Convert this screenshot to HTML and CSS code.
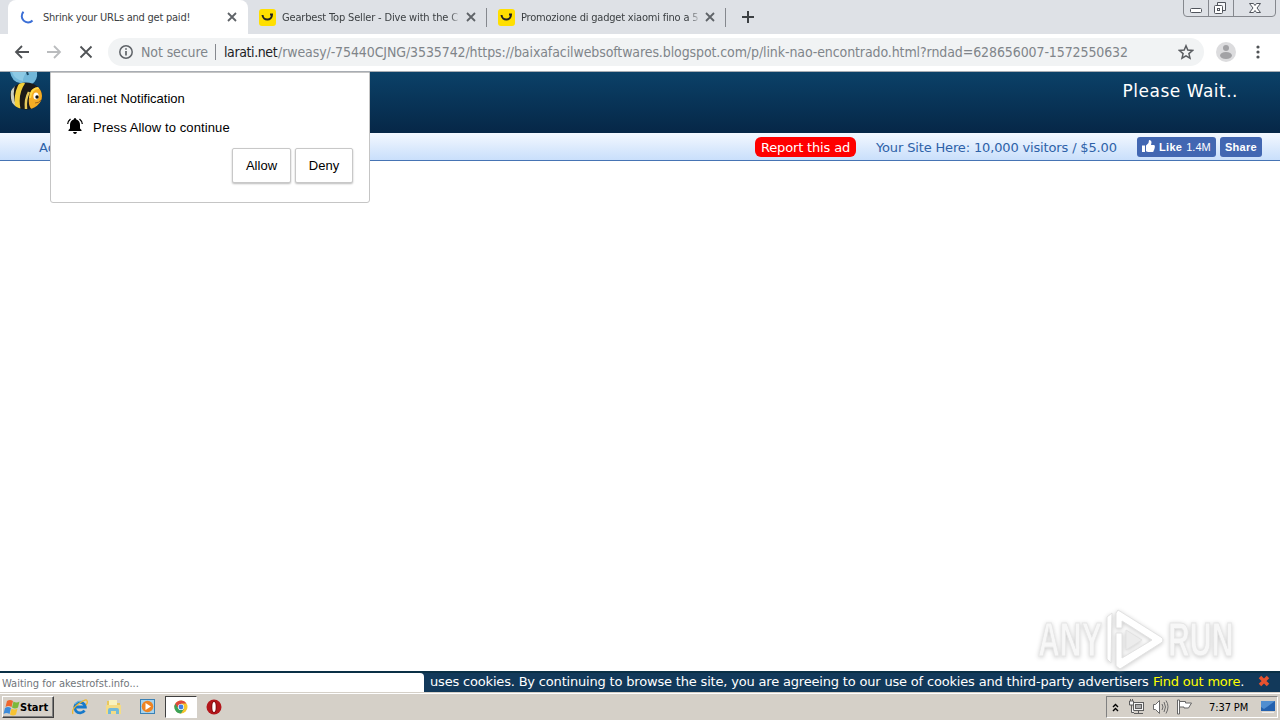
FILE: index.html
```html
<!DOCTYPE html>
<html lang="en">
<head>
  <meta charset="UTF-8">
  <title>Shrink your URLs and get paid!</title>
  <link rel="stylesheet" href="styles.css">
</head>
<body>
  <div class="tabs">
    <div class="tab active">
      <svg class="spinner" width="16" height="16" viewBox="0 0 16 16"><path d="M4.500 2.800A6.200 6.200 0 1 0 13.500 11.500" fill="none" stroke="#3b6fd6" stroke-width="2"/></svg>
      <span class="tab-title">Shrink your URLs and get paid!</span>
      <svg class="close" width="10" height="10" viewBox="0 0 10 10"><path d="M1 1l8 8M9 1l-8 8"/></svg>
    </div>
    <div class="tab">
      <svg class="fav" width="17" height="17" viewBox="0 0 17 17"><rect width="17" height="17" rx="3" fill="#ffdf00"/><path d="M3.500 6c.5 6 9.500 6 9.500-.5L11 5.500" fill="none" stroke="#222" stroke-width="2"/></svg>
      <span class="tab-title fade">Gearbest Top Seller - Dive with the C</span>
      <svg class="close" width="10" height="10" viewBox="0 0 10 10"><path d="M1 1l8 8M9 1l-8 8"/></svg>
    </div>
    <div class="tab">
      <svg class="fav" width="17" height="17" viewBox="0 0 17 17"><rect width="17" height="17" rx="3" fill="#ffdf00"/><path d="M3.500 6c.5 6 9.500 6 9.500-.5L11 5.500" fill="none" stroke="#222" stroke-width="2"/></svg>
      <span class="tab-title last fade">Promozione di gadget xiaomi fino a 5</span>
      <svg class="close" width="10" height="10" viewBox="0 0 10 10"><path d="M1 1l8 8M9 1l-8 8"/></svg>
    </div>
    <svg class="new-tab" width="12" height="12" viewBox="0 0 12 12"><path d="M6 0v12M0 6h12" stroke="#3c4043" stroke-width="2"/></svg>
    <svg class="window-buttons" width="93" height="17" viewBox="0 0 93 17" fill="none">
      <path d="M.5 0v13q0 3.500 3.500 3.500h85q3.500 0 3.500-3.500V0M25.500 0v16M50.500 0v16" stroke="#85888e"/>
      <g stroke="#50545c"><rect x="7.500" y="8.500" width="11" height="4" rx="1" fill="#fff"/><path d="M34.500 5V2.500h8v8H40" fill="#f5f6f8"/><rect x="31.500" y="5.500" width="8" height="8" rx="1" fill="#fff"/><rect x="34.500" y="8.500" width="2" height="2"/><path d="M66.500 3.500h4l1.500 2 1.500-2h4l-3.500 4.500 3.500 4.500h-4L72 10.500l-1.500 2h-4L70 8z" fill="#fff"/></g>
    </svg>
  </div>

  <div class="toolbar">
    <svg class="nav" width="16" height="16" viewBox="0 0 16 16"><path d="M15 8H2M8 2L2 8l6 6" stroke="#505356"/></svg>
    <svg class="nav" width="16" height="16" viewBox="0 0 16 16"><path d="M1 8h13M8 2l6 6-6 6" stroke="#babcbe"/></svg>
    <svg class="nav" width="16" height="16" viewBox="0 0 16 16"><path d="M2.500 2.500l11 11M13.500 2.500l-11 11" stroke="#505356"/></svg>
    <div class="omnibox">
      <svg width="14" height="14" viewBox="0 0 14 14"><circle cx="7" cy="7" r="6.200" fill="none" stroke="#5f6368" stroke-width="1.500"/><path d="M7 6v4.500M7 3.200v1.600" stroke="#5f6368" stroke-width="1.700"/></svg>
      <span class="insecure">Not secure</span>
      <span class="url"><b>larati.net</b><span class="path">/rweasy/-75440CJNG/3535742/https://baixafacilwebsoftwares.blogspot.com/p/link-nao-encontrado.html?rndad=628656007-1572550632</span></span>
      <svg class="star" width="16" height="16" viewBox="0 0 16 16"><path d="M8 1.800l1.800 4.300 4.700.4-3.600 3.100 1.100 4.600L8 11.800l-4 2.400 1.100-4.600-3.600-3.100 4.700-.4z" fill="none" stroke="#5a5d61" stroke-width="1.500"/></svg>
    </div>
    <svg class="avatar" width="20" height="20" viewBox="0 0 20 20"><circle cx="10" cy="10" r="10" fill="#dcdcde"/><circle cx="10" cy="6" r="3" fill="#a2a2a5"/><ellipse cx="10" cy="13.500" rx="6" ry="3.500" fill="#a2a2a5"/></svg>
    <svg class="menu" width="4" height="14" viewBox="0 0 4 14" fill="#505356"><circle cx="2" cy="2" r="1.600"/><circle cx="2" cy="7" r="1.600"/><circle cx="2" cy="12" r="1.600"/></svg>
  </div>

  <div class="page">
    <div class="header">
      <svg class="bee" width="36" height="38" viewBox="0 0 36 38">
        <defs><clipPath id="body"><ellipse cx="18" cy="24" rx="16" ry="13.500"/></clipPath></defs>
        <path d="M2 0q2 10 10 11 6 5 12 1 6-4 5-12z" fill="#72b7d9"/><path d="M4 0q3 8 11 9 0-5 4-9z" fill="#8dcae5"/><path d="M19 0l1 3" stroke="#174763" stroke-width="2"/>
        <g clip-path="url(#body)"><path d="M0 8h36v30H0z" fill="#1c1a18"/><path d="M7 9q-6 14 1 28" fill="none" stroke="#c9cdc0" stroke-width="3"/><path d="M15 10q-8 11-5 27" fill="none" stroke="#f3cf3a" stroke-width="5"/><path d="M21 20q-4 7-3 17" fill="none" stroke="#e8c95a" stroke-width="2.500"/><path d="M36 15q-14-2-15 11-1 8 3 12h12z" fill="#f5ac24"/><path d="M22 26q1-10 9-10" fill="none" stroke="#ffd947" stroke-width="2"/></g>
        <ellipse cx="28" cy="24" rx="2.600" ry="3.600" fill="#fff"/><circle cx="29" cy="25" r="1.700" fill="#111"/><path d="M27 31q4 0 6-3" fill="none" stroke="#a5661b"/>
      </svg>
      <span class="wait">Please Wait..</span>
    </div>
    <div class="subbar">
      <a class="adv">Advertising</a>
      <span class="report">Report this ad</span>
      <span class="your-site">Your Site Here: 10,000 visitors / $5.00</span>
      <span class="fb like"><svg width="13" height="13" viewBox="0 0 13 13" fill="#fff"><path d="M0 5.500h3V12H0zM4 5.500L6.500 3 7 0q2.500 0 2.500 2.500L9 5h3q1.300.5.700 2 .3 1-.4 2 0 1-.6 1.500 0 1.500-1.200 1.500H6l-2-.7z"/></svg><b>Like</b><span class="count">1.4M</span></span>
      <span class="fb share"><b>Share</b></span>
    </div>
    <div class="notification">
      <div class="note-title">larati.net Notification</div>
      <div class="note-row">
        <svg class="bell" width="16" height="16" viewBox="0 0 16 16"><path d="M8 0q1.200 0 1.300 1.500Q13 2.600 13 7v3.500l1.500 1.500v1h-13v-1L3 10.500V7q0-4.400 3.700-5.500Q6.800 0 8 0zM6 14h4q-.5 2-2 2t-2-2z"/><path d="M3.500 1Q1 3 .7 6M12.500 1Q15 3 15.300 6" fill="none" stroke="#000" stroke-width="1.300"/></svg>
        <span class="press">Press Allow to continue</span>
      </div>
      <div class="note-buttons"><button class="allow">Allow</button><button class="deny">Deny</button></div>
    </div>
    <!-- watermark -->
    <div class="watermark">
      <span class="any">ANY</span>
      <svg width="60" height="62" viewBox="0 0 60 62" fill="#fff" stroke="#e2e2e2"><path d="M14 1l43 27q4 3 0 6L16 60l-4-3V24h6v25l30-18L18 12v7h-6V4z"/><path d="M8 4L3 8v42l4 4z"/><path d="M22 21l16 10-16 10z" fill="#ececec"/></svg>
      <span class="run">RUN</span>
    </div>
  </div>

  <div class="cookies">
    <div class="loading">Waiting for akestrofst.info...</div>
    <span class="cookie-text">uses cookies. By continuing to browse the site, you are agreeing to our use of cookies and third-party advertisers</span>
    <span class="more">Find out more<i>.</i></span>
    <svg class="dismiss" width="12" height="12" viewBox="0 0 12 12"><path d="M2 2l8 8M10 2l-8 8" stroke="#e8522f" stroke-width="3.500"/></svg>
  </div>

  <div class="taskbar">
    <div class="start">
      <svg width="18" height="17" viewBox="0 0 18 17"><path d="M4 2q3-2 6 0L8.500 8q-3-2-6 0z" fill="#ee662e"/><path d="M10.500 2.500q3 2 6 0L15 8.500q-3 2-6 0z" fill="#7cb83a"/><path d="M2 9q3-2 6 0l-1.500 6q-3-2-6 0z" fill="#3c8bda"/><path d="M8.500 9.500q3 2 6 0l-1.500 6q-3 2-6 0z" fill="#f7c332"/></svg><b>Start</b>
    </div>
    <svg class="app" width="18" height="18" viewBox="0 0 18 18"><path d="M13.500 12.500A5.300 5.300 0 1 1 14.300 9H5" fill="none" stroke="#1679ca" stroke-width="2.800"/><path d="M4 6q3-4 8-3" fill="none" stroke="#6bc2f2"/><path d="M2 16Q0 11 8 5.500T16 3q1 2-1 4" fill="none" stroke="#efb629" stroke-width="1.200"/></svg>
    <svg class="app" width="18" height="18" viewBox="0 0 18 18"><path d="M2 3h5l1 2h7v8H2z" fill="#e9c75d"/><path d="M4 2h8v5H4z" fill="#f9f2bd"/><path d="M1 7h15v9H1z" fill="#f4dc86"/><path d="M3 16v-4q0-2 2-2h7q2 0 2 2v4h-3v-3H6v3z" fill="#72b9d9"/></svg>
    <svg class="app" width="18" height="18" viewBox="0 0 18 18"><rect x="1.500" y="1.500" width="14" height="14" fill="#a6d3ee" stroke="#3a81b5"/><circle cx="8.500" cy="8.500" r="5.800" fill="#ee8423"/><path d="M6.500 5l5.500 3.500L6.500 12z" fill="#fff"/></svg>
    <div class="current">
      <svg width="14" height="14" viewBox="0 0 14 14"><circle cx="7" cy="7" r="6.500" fill="#f6c52c"/><path d="M7 7H.5a6.500 6.500 0 0 1 12-3.500H7z" fill="#df493c"/><path d="M1.300 3.700A6.500 6.500 0 0 0 7 13.500L10 8.700 7 7 4 8z" fill="#3ba259"/><circle cx="7" cy="7" r="3.100" fill="#fff"/><circle cx="7" cy="7" r="2.400" fill="#427fe2"/></svg>
    </div>
    <svg class="opera" width="16" height="16" viewBox="0 0 16 16"><circle cx="8" cy="8" r="7.500" fill="#b3161b"/><ellipse cx="8" cy="8" rx="3" ry="6" fill="#861014"/><ellipse cx="8" cy="8" rx="1.700" ry="5" fill="#fff"/></svg>
    <div class="tray">
      <svg class="chevrons" width="7" height="9" viewBox="0 0 7 9"><path d="M1 4l2.500-2.500L6 4M1 8l2.500-2.500L6 8" fill="none" stroke="#000" stroke-width="1.400"/></svg>
      <svg class="network" width="17" height="16" viewBox="0 0 17 16" fill="#f4f4f4" stroke="#5d5d5d"><rect x="5.500" y="3.500" width="10" height="8"/><rect x="7.500" y="5.500" width="6" height="4" fill="#aaa"/><path d="M6 14.500h9M10.500 12v2M1.500 2v4h4V2zM2.500 0v2M4.500 0v2M3.500 6v7.500H6"/></svg>
      <svg class="sound" width="17" height="16" viewBox="0 0 17 16" fill="none" stroke="#6a6a6a"><path d="M1.500 5.500h2l4-4v13l-4-4h-2z" fill="#fff"/><path d="M10 5q2 3 0 6M12 3q3 5 0 10M14 1.500q4 6 0 13"/></svg>
      <svg class="flag" width="17" height="16" viewBox="0 0 17 16" fill="#fff" stroke="#666"><path d="M1.500 1h2v14h-2zM3.500 2.500h6v1.500h6l-3 5H8V8H3.500z"/></svg>
      <span class="clock">7:37 PM</span>
      <svg class="desktop" width="16" height="14" viewBox="0 0 16 14"><path d="M1 1h14v10H1z" fill="#2361ae"/><path d="M1 1h14L4 9 1 7z" fill="#508ed0"/><path d="M2 12.500h12" stroke="#eee"/></svg>
    </div>
  </div>
</body>
</html>
```
FILE: styles.css
```css
* {
  box-sizing: border-box;
}
body {
  margin: 0;
  width: 1280px;
  height: 720px;
  overflow: hidden;
  display: flex;
  flex-direction: column;
  background: #fff;
  font-family: "DejaVu Sans", sans-serif;
  white-space: nowrap;
}
svg {
  flex: none;
  display: block;
}

/* Browser tabs */
.tabs {
  height: 34px;
  background: #dee1e6;
  display: flex;
  padding-left: 8px;
  font: 11px "DejaVu Sans Condensed", "DejaVu Sans", sans-serif;
  color: #3c4043;
}
.tab {
  width: 239px;
  height: 34px;
  display: flex;
  align-items: center;
  padding: 0 11px;
  position: relative;
}
.tab.active {
  width: 240px;
  background: #fff;
  border-radius: 8px 8px 0 0;
}
.tab:not(.active)::after {
  content: "";
  position: absolute;
  right: 0;
  top: 8px;
  height: 19px;
  border-right: 1px solid #85888e;
}
.tab-title {
  flex: none;
  width: 178px;
  margin-left: 6px;
  letter-spacing: -0.16px;
}
.tab-title.last {
  letter-spacing: -0.2px;
}
.active .tab-title {
  width: 176px;
  margin-left: 8px;
  letter-spacing: -0.24px;
}
.fade {
  mask-image: linear-gradient(90deg, #000 94%, transparent 101%);
}
.close {
  margin-left: 6px;
  stroke: #5f6368;
  stroke-width: 1.8;
}
.active .close {
  margin-left: 8px;
}
.new-tab {
  margin: 11px 0 0 16px;
}
.window-buttons {
  margin: 0 4px 0 auto;
}

/* Address bar */
.toolbar {
  height: 38px;
  display: flex;
  align-items: center;
  padding: 0 20px 2px 14px;
  border-bottom: 1px solid #a8adb3;
}
.nav {
  margin-right: 16px;
  fill: none;
  stroke-width: 1.8;
}
.omnibox {
  width: 1096px;
  height: 28px;
  margin-left: -2px;
  background: #f1f3f4;
  border-radius: 14px;
  display: flex;
  align-items: center;
  padding: 0 10px 0 11px;
  font: 14px "DejaVu Sans Condensed", "DejaVu Sans", sans-serif;
  color: #80858a;
}
.insecure {
  width: 75px;
  margin-left: 8px;
  border-right: 1px solid #85888e;
  height: 16px;
  line-height: 16px;
  letter-spacing: -0.1px;
}
.url {
  margin-left: 8px;
  display: flex;
}
.url b {
  font-weight: normal;
  color: #202124;
  width: 54px;
  letter-spacing: -0.4px;
}
.path {
  letter-spacing: -0.1px;
}
.star {
  margin-left: auto;
}
.avatar {
  margin-left: 12px;
}
.menu {
  margin-left: 20px;
}

/* Page */
.page {
  height: 599px;
  position: relative;
}
.header {
  height: 61px;
  background: linear-gradient(#0b4168, #062747);
  display: flex;
  justify-content: space-between;
  padding: 0 42px 0 8px;
}
.wait {
  color: #fff;
  font-size: 17px;
  letter-spacing: 0.5px;
  line-height: 38px;
}
.subbar {
  height: 28px;
  background: linear-gradient(#f3f8ff, #c9dffb);
  border-bottom: 1px solid #4674b4;
  display: flex;
  align-items: center;
  padding-left: 39px;
  color: #2e62a8;
  font-size: 13px;
}
.adv {
  width: 716px;
  padding-top: 1px;
}
.report {
  width: 101px;
  height: 20px;
  line-height: 21px;
  background: #f00;
  border-radius: 6px;
  color: #fff;
  text-align: center;
  letter-spacing: -0.15px;
}
.your-site {
  width: 241px;
  margin: 0 20px;
  padding-top: 1px;
  letter-spacing: -0.15px;
}
.fb {
  height: 20px;
  background: #4267b2;
  border-radius: 3px;
  color: #fff;
  font: 11px "Liberation Sans", Arial, sans-serif;
  display: flex;
  align-items: center;
  justify-content: center;
}
.like {
  width: 79px;
  margin-right: 4px;
  justify-content: flex-start;
  padding-left: 5px;
}
.like b {
  margin: 0 4px;
  letter-spacing: 0.3px;
}
.share {
  width: 42px;
  letter-spacing: 0.3px;
}

/* Notification prompt */
.notification {
  position: absolute;
  left: 50px;
  top: 0;
  width: 320px;
  height: 131px;
  background: #fff;
  border: 1px solid #c5c5c5;
  border-radius: 0 0 3px 3px;
  padding: 18px 16px;
  font: 13px "Liberation Sans", Arial, sans-serif;
  color: #000;
}
.note-title {
  line-height: 16px;
}
.note-row {
  display: flex;
  align-items: center;
  margin-top: 10px;
  height: 18px;
}
.bell {
  margin-bottom: 1px;
}
.press {
  margin: 2px 0 0 10px;
  letter-spacing: 0.1px;
}
.note-buttons {
  display: flex;
  justify-content: flex-end;
  gap: 4px;
  margin-top: 13px;
}
.note-buttons button {
  width: 59px;
  height: 35px;
  padding: 0;
  background: #fff;
  border: 1px solid #c8c8c8;
  border-radius: 2px;
  box-shadow: 0 1px 2px #bbb;
  font: inherit;
  color: #000;
}
.note-buttons .deny {
  width: 58px;
}

/* Watermark */
.watermark {
  position: absolute;
  left: 1038px;
  top: 537px;
  display: flex;
  align-items: center;
  filter: drop-shadow(0 1px 2px #ccc);
}
.watermark span {
  width: 66px;
  font: bold 48px/60px "Liberation Sans", sans-serif;
  color: #f7f7f7;
  -webkit-text-stroke: 1px #e6e6e6;
  transform: scaleX(.63);
  transform-origin: left;
}
.watermark svg {
  margin-right: 4px;
}

/* Cookie notice and load status */
.cookies {
  height: 21px;
  background: #12395a;
  border-top: 2px solid #0a3046;
  color: #fff;
  display: flex;
  align-items: center;
  font-size: 13px;
}
.loading {
  width: 424px;
  height: 19px;
  margin-right: 6px;
  align-self: flex-end;
  background: #fff;
  border-radius: 0 4px 0 0;
  padding-left: 2px;
  color: #70757a;
  font: 11px/21px "DejaVu Sans Condensed", sans-serif;
}
.cookie-text {
  width: 723px;
  letter-spacing: -0.18px;
  padding-bottom: 2px;
}
.more {
  color: #ff0;
  letter-spacing: -0.2px;
  padding-bottom: 2px;
}
.more i {
  color: #fff;
  font-style: normal;
}
.dismiss {
  margin: 0 10px 4px auto;
}

/* Taskbar */
.taskbar {
  height: 28px;
  background: #d5d0c8;
  border-top: 1px solid #d5d0c8;
  box-shadow: inset 0 1px #fff;
  display: flex;
  align-items: center;
  padding: 1px 0 0 2px;
}
.start {
  width: 52px;
  height: 22px;
  border: 1px solid;
  border-color: #fff #404040 #404040 #fff;
  box-shadow: inset -1px -1px #808080;
  display: flex;
  align-items: center;
  font: 11px "DejaVu Sans Condensed", sans-serif;
}
.start b {
  margin-left: -1px;
}
.app {
  margin-left: 16px;
}
.start + .app {
  margin-left: 17px;
}
.current {
  width: 32px;
  height: 22px;
  margin-left: 8px;
  background: #fff;
  border: 1px solid;
  border-color: #404040 #fff #fff #404040;
  display: flex;
  align-items: center;
  justify-content: center;
}
.opera {
  margin-left: 9px;
}
.tray {
  width: 172px;
  height: 22px;
  margin: 0 2px 0 auto;
  border: 1px solid;
  border-color: #808080 #fff #fff #808080;
  display: flex;
  align-items: center;
  padding-left: 5px;
  font: 11px "DejaVu Sans Condensed", sans-serif;
}
.network {
  margin-left: 9px;
}
.sound, .flag {
  margin-left: 7px;
}
.clock {
  width: 43px;
  margin-left: 16px;
  letter-spacing: -0.1px;
}
.desktop {
  margin-left: 8px;
}
```
